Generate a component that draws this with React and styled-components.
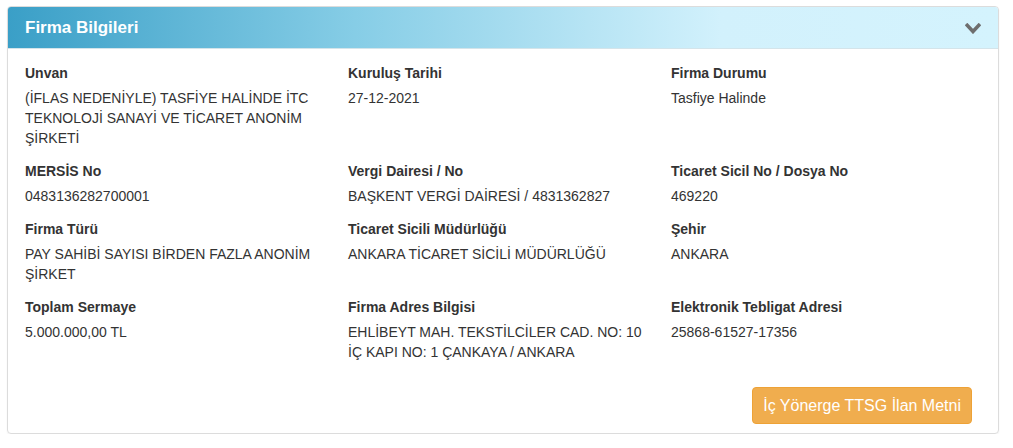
import React from "react";
import styled, { createGlobalStyle } from "styled-components";

const Global = createGlobalStyle`
  body {
    margin: 0;
    background: #fff;
    font-family: "Liberation Sans", Arial, sans-serif;
    font-size: 14px;
    color: #333;
  }
`;

const Page = styled.div`
  padding: 6px 14px 0 7px;
`;

const Panel = styled.section`
  border: 1px solid #dcdcdc;
  border-radius: 4px;
  box-shadow: 0 1px 2px rgba(0, 0, 0, 0.06);
  overflow: hidden;
  height: 428px;
  box-sizing: border-box;
  display: flex;
  flex-direction: column;
`;

const Header = styled.header`
  display: flex;
  align-items: center;
  justify-content: space-between;
  height: 41px;
  padding: 0 17px;
  background: linear-gradient(to right, #3a9fc7 0%, #86cde6 35%, #d2f1fc 72%, #d4f3fd 100%);
  border-bottom: 1px solid #d4e4ea;
`;

const Title = styled.h3`
  margin: 0;
  font-size: 17px;
  font-weight: bold;
  color: #fff;
`;

const Toggle = styled.svg`
  display: block;
  width: 16px;
  height: 11px;
  margin-top: 2px;
`;

const Body = styled.div`
  flex: 1;
  display: flex;
  flex-direction: column;
  padding: 14px 26px 0 17px;
`;

const Grid = styled.div`
  display: grid;
  grid-template-columns: repeat(3, 323px);
`;

const Item = styled.div`
  padding-right: 12px;
  padding-bottom: 13px;
`;

const Label = styled.div`
  font-weight: bold;
  line-height: 20px;
  margin-bottom: 5px;
`;

const Value = styled.div`
  line-height: 20px;
`;

const Footer = styled.div`
  display: flex;
  justify-content: flex-end;
  margin-top: 12px;
`;

const Button = styled.button`
  font-family: "Liberation Sans", Arial, sans-serif;
  font-size: 16px;
  color: #fff;
  background: #f0ad4e;
  border: 1px solid #eea236;
  border-radius: 4px;
  height: 37px;
  padding: 0 10px;
  cursor: pointer;
`;

const fields = [
  ["Unvan", "(İFLAS NEDENİYLE) TASFİYE HALİNDE İTC TEKNOLOJİ SANAYİ VE TİCARET ANONİM ŞİRKETİ"],
  ["Kuruluş Tarihi", "27-12-2021"],
  ["Firma Durumu", "Tasfiye Halinde"],
  ["MERSİS No", "0483136282700001"],
  ["Vergi Dairesi / No", "BAŞKENT VERGİ DAİRESİ / 4831362827"],
  ["Ticaret Sicil No / Dosya No", "469220"],
  ["Firma Türü", "PAY SAHİBİ SAYISI BİRDEN FAZLA ANONİM ŞİRKET"],
  ["Ticaret Sicili Müdürlüğü", "ANKARA TİCARET SİCİLİ MÜDÜRLÜĞÜ"],
  ["Şehir", "ANKARA"],
  ["Toplam Sermaye", "5.000.000,00 TL"],
  ["Firma Adres Bilgisi", "EHLİBEYT MAH. TEKSTİLCİLER CAD. NO: 10 İÇ KAPI NO: 1 ÇANKAYA / ANKARA"],
  ["Elektronik Tebligat Adresi", "25868-61527-17356"],
];

export default function App() {
  return (
    <Page>
      <Global />
      <Panel>
        <Header>
          <Title>Firma Bilgileri</Title>
          <Toggle viewBox="0 0 16 11">
            <path d="M1 1 L8 8.5 L15 1" fill="none" stroke="#6e6e6e" strokeWidth="3.6" strokeLinejoin="miter" />
          </Toggle>
        </Header>
        <Body>
          <Grid>
            {fields.map(([label, value]) => (
              <Item key={label}>
                <Label>{label}</Label>
                <Value>{value}</Value>
              </Item>
            ))}
          </Grid>
          <Footer>
            <Button>İç Yönerge TTSG İlan Metni</Button>
          </Footer>
        </Body>
      </Panel>
    </Page>
  );
}
